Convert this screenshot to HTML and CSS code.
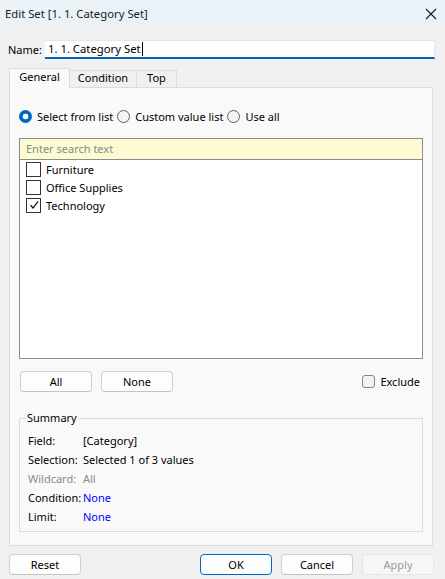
FILE: index.html
```html
<!DOCTYPE html>
<html>
<head>
<meta charset="utf-8">
<link rel="stylesheet" href="styles.css">
</head>
<body>
<div class="window">
  <div class="titlebar">
    <span class="title">Edit Set [1. 1. Category Set]</span>
    <svg class="close" width="12" height="12" viewBox="0 0 12 12"><path d="M1 1L11 11M11 1L1 11" stroke="#1a1a1a" stroke-width="1.1" fill="none"/></svg>
  </div>
  <div class="name-row">
    <span class="name-label">Name:</span>
    <div class="name-input">1. 1. Category Set<span class="caret"></span></div>
  </div>
  <div class="tabs">
    <div class="tab active">General</div>
    <div class="tab">Condition</div>
    <div class="tab">Top</div>
  </div>
  <div class="panel">
    <div class="radios">
      <span class="radio on"></span><span class="rlabel">Select from list</span>
      <span class="radio"></span><span class="rlabel">Custom value list</span>
      <span class="radio"></span><span class="rlabel">Use all</span>
    </div>
    <div class="listbox">
      <div class="search">Enter search text</div>
      <div class="items">
        <div class="item"><span class="cb"></span>Furniture</div>
        <div class="item"><span class="cb"></span>Office Supplies</div>
        <div class="item"><span class="cb"><svg width="12" height="12" viewBox="0 0 12 12"><path d="M2.5 6.2L5 9L10 2.5" stroke="#000" stroke-width="1.2" fill="none"/></svg></span>Technology</div>
      </div>
    </div>
    <div class="btn-row">
      <div class="btn">All</div>
      <div class="btn">None</div>
      <div class="spacer"></div>
      <span class="cb2"></span><span class="exlabel">Exclude</span>
    </div>
    <fieldset class="summary">
      <legend>Summary</legend>
      <div class="srow"><span class="sk">Field:</span><span>[Category]</span></div>
      <div class="srow"><span class="sk">Selection:</span><span>Selected 1 of 3 values</span></div>
      <div class="srow grey"><span class="sk">Wildcard:</span><span>All</span></div>
      <div class="srow"><span class="sk">Condition:</span><span class="link">None</span></div>
      <div class="srow"><span class="sk">Limit:</span><span class="link">None</span></div>
    </fieldset>
  </div>
  <div class="footer">
    <div class="btn">Reset</div>
    <div class="spacer"></div>
    <div class="btn primary">OK</div>
    <div class="btn">Cancel</div>
    <div class="btn disabled">Apply</div>
  </div>
</div>
</body>
</html>
```
FILE: styles.css
```css
* { box-sizing: border-box; }
html, body { margin: 0; padding: 0; }
body {
  width: 445px;
  height: 579px;
  background: #f0f0f0;
  font-family: "Noto Sans", "DejaVu Sans", sans-serif;
  font-size: 11px;
  color: #000;
  overflow: hidden;
}
.window { display: flex; flex-direction: column; height: 579px; }
.titlebar {
  height: 27px;
  background: #eaf2f8;
  display: flex;
  align-items: center;
  justify-content: space-between;
  padding: 0 8px 0 5px;
}
.title { color: #1a1a1a; font-size: 11.3px; }
.close { display: block; }
.name-row {
  display: flex;
  align-items: center;
  margin-top: 13px;
  padding: 0 10px 0 8px;
  height: 19px;
}
.name-label { width: 37px; }
.name-input {
  flex: 1;
  height: 19px;
  background: #fff;
  border-top: 1px solid #e5e5e5;
  border-right: 1px solid #e5e5e5;
  border-bottom: 2px solid #0067c0;
  padding-left: 3px;
  line-height: 16px;
  display: flex;
  align-items: center;
  font-size: 11.3px;
}
.caret { display: inline-block; width: 1px; height: 14px; background: #000; margin-left: 1px; }
.tabs {
  display: flex;
  align-items: flex-end;
  margin: 9px 0 0 9px;
  height: 19px;
}
.tab {
  height: 17px;
  border: 1px solid #dcdcdc;
  border-bottom: none;
  border-left: none;
  background: #f0f0f0;
  line-height: 14px;
  text-align: center;
}
.tab.active {
  height: 20px;
  margin-bottom: -1px;
  background: #f9f9f9;
  border-left: 1px solid #dcdcdc;
  line-height: 15px;
  position: relative;
  z-index: 1;
  width: 61px;
}
.tab:nth-child(2) { width: 67px; }
.tab:nth-child(3) { width: 40px; }
.panel {
  margin: 0 12px 0 9px;
  height: 459px;
  background: #f9f9f9;
  border: 1px solid #dcdcdc;
  padding: 21px 9px 13px 9px;
  display: flex;
  flex-direction: column;
}
.radios { display: flex; align-items: center; height: 14px; }
.radio {
  width: 13px; height: 13px;
  border-radius: 50%;
  border: 1px solid #606060;
  background: #f5f5f5;
  margin-right: 5px;
  flex: none;
}
.radio.on {
  border: none;
  background: radial-gradient(circle, #fff 0 2.6px, #0067c0 3.2px);
}
.rlabel { margin-right: 4px; }
.listbox {
  margin-top: 15px;
  height: 221px;
  border: 1px solid #8c8c8c;
  background: #fff;
  display: flex;
  flex-direction: column;
}
.search {
  height: 21px;
  background: #fdfbd2;
  border-bottom: 1px solid #8c8c8c;
  color: #8a8a8a;
  padding-left: 6px;
  line-height: 20px;
}
.items { padding: 0 0 0 6px; }
.item { height: 18px; display: flex; align-items: center; }
.cb {
  width: 15px; height: 15px;
  border: 1px solid #333;
  background: #fff;
  margin-right: 5px;
  display: flex; align-items: center; justify-content: center;
}
.btn-row {
  margin-top: 12px;
  display: flex;
  align-items: center;
  height: 21px;
  padding-left: 1px;
  padding-right: 3px;
}
.btn {
  width: 72px;
  height: 21px;
  border: 1px solid #d0d0d0;
  border-bottom-color: #c4c4c4;
  border-radius: 4px;
  background: #fdfdfd;
  text-align: center;
  line-height: 19px;
  margin-right: 9px;
}
.spacer { flex: 1; }
.cb2 {
  width: 13px; height: 13px;
  border: 1px solid #858585;
  border-radius: 3px;
  background: #f3f3f3;
  margin-right: 5px;
}
.summary {
  margin: 19px 0 0 0;
  padding: 6px 8px 0 8px;
  border: 1px solid #dcdcdc;
  flex: 1;
}
.summary legend { padding: 0 1px; margin-left: -2px; line-height: 14px; }
.srow { display: flex; height: 19px; align-items: center; }
.sk { width: 55px; }
.grey { color: #8a8a8a; }
.link { color: #0000ff; }
.footer {
  display: flex;
  align-items: center;
  padding: 0 11px 0 9px;
  margin-top: 8px;
  height: 21px;
}
.footer .btn { margin-right: 9px; }
.footer .btn.disabled { margin-right: 0; color: #9a9a9a; border-color: #e5e5e5; background: #f7f7f7; }
.btn.primary { border: 1px solid #0067c0; }
```
